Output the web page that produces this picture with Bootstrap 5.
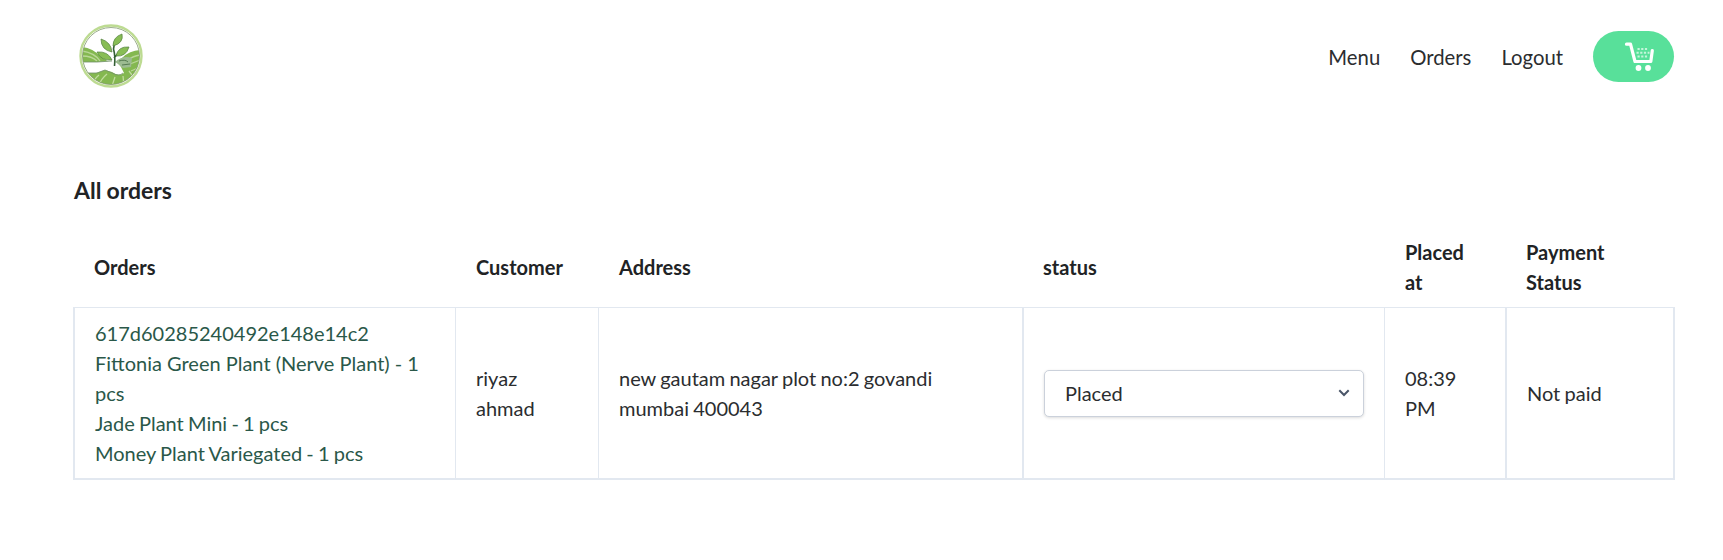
<!DOCTYPE html>
<html lang="en">
<head>
<meta charset="utf-8">
<meta name="viewport" content="width=device-width, initial-scale=1">
<title>All orders</title>
<link href="https://cdn.jsdelivr.net/npm/bootstrap@5.3.0/dist/css/bootstrap.min.css" rel="stylesheet">
<style>
body { font-family: Lato, sans-serif; font-size: 20px; line-height: 30px; color: #2b2d2f; background: #fff; }
.page { width: 1602px; margin-left: 73px; }
.topbar { height: 112px; padding-right: 1px; }
.logo { width: 64px; height: 64px; margin-left: 6px; }
.menu { gap: 30px; }
.menu a { color: #2b2d2f; text-decoration: none; padding-top: 2px; font-size: 20.3px; }
.menu .cart-btn { background: #58e09a; width: 81px; height: 51px; border-radius: 26px; padding: 0 0 0 12px; }
.page-title { font-size: 23px; line-height: 35px; font-weight: 700; color: #212325; word-spacing: -.5px; margin: 61px 0 29px 1px; }
.orders { table-layout: fixed; width: 1602px; border-collapse: separate; border-spacing: 0; }
.orders th { font-weight: 700; color: #212325; padding: 0 20px 10px 21px; height: 70px; vertical-align: middle; }
.orders td { border: solid #e2e8f0; border-width: 1px 0 2px 1px; padding: 10px 20px; vertical-align: middle; word-spacing: -.9px; }
.orders td.thick { border-left-width: 2px; }
.orders td:last-child { border-right-width: 2px; }
.items { color: #2a5849; }
.items .wide { word-spacing: 0; }
.status-select { height: 47px; font-size: 20px; line-height: 30px; padding: 7px 40px 8px 20px; border: 1px solid #cbd1db; border-radius: 5px; color: #2b2d2f; box-shadow: 0 1px 3px rgba(0,0,0,.14);
  background-image: url("data:image/svg+xml,%3Csvg xmlns='http://www.w3.org/2000/svg' viewBox='0 0 12 8'%3E%3Cpath d='M1.3 1.3 6 6l4.7-4.7' fill='none' stroke='%234a5568' stroke-width='2'/%3E%3C/svg%3E"); background-size: 12px 8px; background-position: right 13px center; }
</style>
</head>
<body>
<div class="page">
  <nav class="topbar d-flex align-items-center justify-content-between">
    <a href="#" class="logo d-block" aria-label="Home">
      <svg class="d-block" width="64" height="64" viewBox="0 0 64 64">
        <defs><clipPath id="disc"><circle cx="32" cy="32" r="28.500"/></clipPath></defs>
        <circle cx="32" cy="32" r="30.500" fill="#fff" stroke="#bddb92" stroke-width="2.400"/>
        <g clip-path="url(#disc)">
          <path d="M3 23q11 1 19 10l11 7 10-6q8-8 19-8v36H3z" fill="#84b850"/>
          <path d="M3 27q13 2 18 10M3 32q10 0 15 5M61 31q-7 1-12 5M61 36l-10 4M61 43l-9 4" fill="none" stroke="#b9d796" stroke-width="1.300"/>
          <path d="M36 38q8-7 17-4l-1 9-8 1z" fill="#9cbb91"/>
          <path d="M40 37q6-2 9 1M43 41l8-1" fill="none" stroke="#557a50" stroke-width="1"/>
          <path d="M2 38h16l15-1q5 1 9 6l3 6q-5 4-12-1l-7-2-9 3H2z" fill="#fff"/>
          <path d="M5 38h13l15-1M6 49h12l8-3 7 3q7 4 11 0" fill="none" stroke="#72916b" stroke-width=".8"/>
          <path d="M20 51q-5 4-6 10M28 50q-7 6-8 12M36 53l-3 9M44 52l1 10M50 47l6 8" fill="none" stroke="#c0dc9d" stroke-width="1.300"/>
        </g>
        <circle cx="32" cy="32" r="28.500" fill="none" stroke="#82986f" stroke-width=".8"/>
        <path d="M35.500 42q1-10-1-17l1-6M35 34l6-7" fill="none" stroke="#345f35" stroke-width="1.600"/>
        <g fill="#88bd55" stroke="#527f3d" stroke-width=".7">
          <path d="M34 22q0-9 9-12 2 9-9 12zM33 28q-11-2-11-13 10 3 11 13zM37 32q2-10 13-9-3 10-13 9zM33 36q-11 1-15-8 11-1 15 8z"/>
        </g>
      </svg>
    </a>
    <div class="menu d-flex align-items-center">
      <a href="#">Menu</a>
      <a href="#">Orders</a>
      <a href="#">Logout</a>
      <a href="#" class="cart-btn d-flex align-items-center justify-content-center" aria-label="Cart">
        <svg width="32" height="30" viewBox="0 0 32 30">
          <path d="M2.500 3.200h4L11 20.500h15.800L28.300 9.500" fill="none" stroke="#fff" stroke-width="3.200" stroke-linecap="round" stroke-linejoin="round"/>
          <path d="M13.500 8h10M12.500 11.800h13M13.500 15.500h10" fill="none" stroke="#c5f6db" stroke-width="2" stroke-dasharray="2.200 1.500"/>
          <circle cx="14.500" cy="27" r="2.900" fill="#fff"/><circle cx="24" cy="27" r="2.900" fill="#fff"/>
        </svg>
      </a>
    </div>
  </nav>
  <h1 class="page-title">All orders</h1>
  <table class="orders">
    <colgroup><col style="width:382px"><col style="width:143px"><col style="width:424px"><col style="width:362px"><col style="width:121px"><col style="width:170px"></colgroup>
    <thead>
      <tr><th>Orders</th><th>Customer</th><th>Address</th><th>status</th><th>Placed at</th><th>Payment Status</th></tr>
    </thead>
    <tbody>
      <tr>
        <td class="thick items"><div>617d60285240492e148e14c2</div><div class="wide">Fittonia Green Plant (Nerve Plant) - 1 pcs</div><div>Jade Plant Mini - 1 pcs</div><div>Money Plant Variegated - 1 pcs</div></td>
        <td>riyaz ahmad</td>
        <td>new gautam nagar plot no:2 govandi mumbai 400043</td>
        <td class="thick"><select class="form-select status-select" aria-label="Order status"><option>Placed</option></select></td>
        <td>08:39 PM</td>
        <td class="thick">Not paid</td>
      </tr>
    </tbody>
  </table>
</div>
<script src="https://cdn.jsdelivr.net/npm/bootstrap@5.3.0/dist/js/bootstrap.bundle.min.js"></script>
</body>
</html>
